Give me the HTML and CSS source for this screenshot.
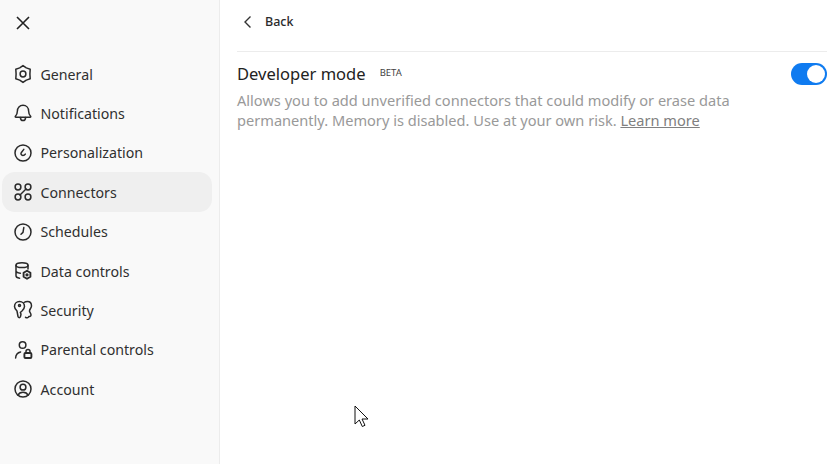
FILE: index.html
```html
<!DOCTYPE html>
<html lang="en">
<head>
<meta charset="utf-8">
<title>Settings</title>
<link rel="stylesheet" href="styles.css">
</head>
<body>
<div class="app">
  <aside class="sidebar">
    <button class="close" aria-label="Close">
      <svg viewBox="0 0 16 16" class="close-icon"><path d="M2 2l12 12M14 2L2 14"/></svg>
    </button>
    <nav class="nav">
      <a class="item"><svg class="icon" viewBox="0 0 20 20"><path d="M10 1.600L13.300 3.900 17.200 5.200 16.900 10 17.200 14.800 13.300 16.100 10 18.400 6.700 16.100 2.800 14.800 3.100 10 2.800 5.200 6.700 3.900z"/><circle cx="10" cy="10" r="2.900"/></svg>General</a>
      <a class="item"><svg class="icon" viewBox="0 0 20 20"><path d="M10 2.200c-3.400 0-5.600 2.600-5.600 5.800 0 2.600-.9 4-2 5.200-.4.5-.1 1.100.5 1.100h14.200c.6 0 .9-.6.5-1.100-1.100-1.200-2-2.600-2-5.200 0-3.200-2.200-5.800-5.600-5.800z"/><path d="M7.400 14.600c.1 1.600 1.200 2.900 2.600 2.900s2.500-1.300 2.600-2.900"/></svg>Notifications</a>
      <a class="item"><svg class="icon" viewBox="0 0 20 20"><circle cx="10" cy="10" r="8"/><path d="M10.800 6.400l-2.600 3.400c-.6 1 0 2.600 1.700 2.600 1.100 0 1.900-.5 2.400-1.300"/></svg>Personalization</a>
      <a class="item active"><svg class="icon" viewBox="0 0 20 20"><circle cx="5" cy="5" r="2.900"/><circle cx="15" cy="5" r="2.900"/><circle cx="5" cy="15" r="2.900"/><circle cx="15" cy="15" r="2.900"/><path d="M7 13l6-6"/></svg>Connectors</a>
      <a class="item"><svg class="icon" viewBox="0 0 20 20"><circle cx="10" cy="10" r="8"/><path d="M10.800 5.600l-.8 4.800-2 1.800"/></svg>Schedules</a>
      <a class="item"><svg class="icon" viewBox="0 0 20 20"><ellipse cx="9" cy="4.200" rx="6" ry="2.400"/><path d="M3 4.200v10.600c0 1.200 1.400 2.200 3.600 2.400M15 4.200v3.800M3 9.800c0 1.200 1.800 2.200 4.400 2.400"/><path class="thick" d="M14 9.800l3.400 2 0 4-3.400 2-3.400-2 0-4z"/><circle cx="14" cy="13.800" r=".9"/></svg>Data controls</a>
      <a class="item"><svg class="icon" viewBox="0 0 20 20"><path d="M6.500 1.500C3.500 1.500 1.500 3.800 1.500 6.500 1.500 8.500 3 10 4 11L5 16.500C5.200 18 7.300 18 7.500 16.500L8 14 7.300 12.500 9 11C10.500 9.500 11.500 8 11.500 6.500 11.500 3.800 9.500 1.500 6.500 1.500z"/><path d="M11 2.500C12 1.800 13.500 1.500 14.500 1.500 17 1.500 18.500 3.500 18.500 6 18.500 8 16.500 9 16.500 11 16.500 12.500 18 13 18 15 18 16.500 16.500 16.800 15.800 16.500 15 18 13.500 18.300 12.500 17.200"/><circle cx="6.500" cy="5.600" r="1"/></svg>Security</a>
      <a class="item"><svg class="icon" viewBox="0 0 20 20"><circle cx="9.600" cy="5" r="3.300"/><path d="M2.600 18c.2-3.200 2.200-5.400 5-6"/><rect class="thick" x="11.400" y="13" width="7" height="5" rx="1"/><path d="M13 13v-1.400a2 2 0 0 1 4 0V13"/></svg>Parental controls</a>
      <a class="item"><svg class="icon" viewBox="0 0 20 20"><circle cx="10" cy="10" r="8"/><circle cx="10" cy="8.200" r="2.900"/><path d="M5 16.200c.8-2 2.700-3 5-3s4.200 1 5 3"/></svg>Account</a>
    </nav>
  </aside>
  <main class="main">
    <header class="back">
      <svg class="chevron" viewBox="0 0 10 14"><path d="M7.500 1.500L2 7l5.500 5.500"/></svg>
      <span>Back</span>
    </header>
    <section class="setting">
      <div class="setting-text">
        <div class="title-row"><h1 class="title">Developer mode</h1><span class="badge">BETA</span></div>
        <p class="desc">Allows you to add unverified connectors that could modify or erase data permanently. Memory is disabled. Use at your own risk. <a class="learn">Learn more</a></p>
      </div>
      <div class="toggle"><span class="knob"></span></div>
    </section>
    <svg class="cursor" viewBox="0 0 16 24"><path d="M1 1v18l4.300-4 3 6.500 2.700-1.200-3-6.300h6z"/></svg>
  </main>
</div>
</body>
</html>
```
FILE: styles.css
```css
* { box-sizing: border-box; }
html, body { margin: 0; height: 100%; }
body { background: #fff; color: #2b2b2b; font-family: "Noto Sans", "Open Sans", sans-serif; overflow: hidden; }
.app { display: flex; width: 840px; height: 464px; }
.sidebar { width: 220px; flex: none; background: #f9f9f9; border-right: 1px solid #ececec; padding: 0 7px 0 1.500px; }
.close { display: flex; align-items: center; justify-content: center; width: 16px; height: 16px; margin: 15px 0 0 13.500px; padding: 0; border: 0; background: none; }
.close-icon { width: 16px; height: 16px; fill: none; stroke: #222; stroke-width: 1.6; }
.nav { display: flex; flex-direction: column; margin-top: 23px; }
.item { display: flex; align-items: center; gap: 7.500px; height: 39.400px; padding-left: 11.500px; padding-top: .8px; border-radius: 13px; font-size: 14.200px; color: #303030; }
.item.active { background: #efefef; }
.icon { width: 20px; height: 20px; flex: none; fill: none; stroke: #2a2a2a; stroke-width: 1.500; stroke-linecap: round; stroke-linejoin: round; }
.icon .thick { stroke-width: 1.900; }
.main { position: relative; flex: 1; padding: 0 13px 0 17px; }
.back { display: flex; align-items: center; gap: 12px; height: 52px; padding: 0 0 8px 6px; border-bottom: 1px solid #ececec; font-size: 12.500px; font-weight: 500; color: #2b2b2b; }
.chevron { width: 10px; height: 14px; fill: none; stroke: #333; stroke-width: 1.400; }
.setting { display: flex; justify-content: space-between; align-items: flex-start; padding-top: 10px; }
.setting-text { width: 530px; }
.title-row { display: flex; align-items: center; gap: 14px; }
.title { margin: 0; font-size: 16.550px; font-weight: 400; line-height: 24px; color: #222; }
.badge { font-size: 9.500px; color: #444; position: relative; top: -1.500px; }
.desc { margin: 5px 0 0; font-size: 14.600px; line-height: 19.500px; color: #999; }
.learn { color: #808080; text-decoration: underline; }
.toggle { display: flex; align-items: center; justify-content: flex-end; width: 36px; height: 22px; margin-top: 1px; padding-right: 2px; border-radius: 11px; background: #0f7bf0; }
.knob { width: 18px; height: 18px; border-radius: 50%; background: #fff; }
.cursor { position: absolute; left: 134px; top: 405px; width: 16px; height: 24px; fill: #fff; stroke: #111; stroke-width: 1; }
```
